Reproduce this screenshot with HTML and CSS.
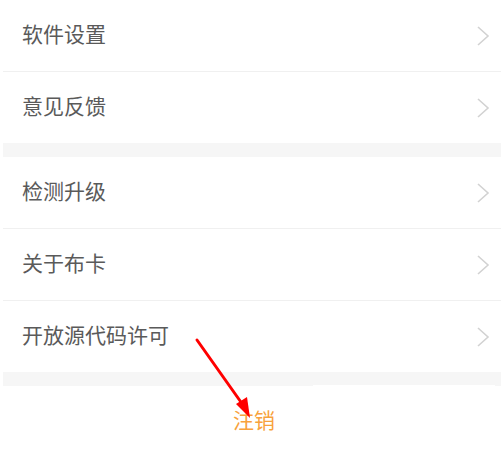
FILE: index.html
```html
<!DOCTYPE html>
<html lang="zh-CN">
<head>
<meta charset="UTF-8">
<title>设置</title>
<link rel="stylesheet" href="styles.css">
</head>
<body>
<div class="page">
  <ul class="group">
    <li class="item"><span class="label">软件设置</span><svg class="chev" viewBox="0 0 14 22"><polyline points="2,2 12,11 2,20"/></svg></li>
    <li class="item"><span class="label">意见反馈</span><svg class="chev" viewBox="0 0 14 22"><polyline points="2,2 12,11 2,20"/></svg></li>
  </ul>
  <div class="gap"></div>
  <ul class="group">
    <li class="item"><span class="label">检测升级</span><svg class="chev" viewBox="0 0 14 22"><polyline points="2,2 12,11 2,20"/></svg></li>
    <li class="item"><span class="label">关于布卡</span><svg class="chev" viewBox="0 0 14 22"><polyline points="2,2 12,11 2,20"/></svg></li>
    <li class="item"><span class="label">开放源代码许可</span><svg class="chev" viewBox="0 0 14 22"><polyline points="2,2 12,11 2,20"/></svg></li>
  </ul>
  <div class="gap"></div>
  <div class="logout">注销</div>

  <div class="patch"></div>
  <svg class="arrow" width="501" height="449" viewBox="0 0 501 449">
    <line x1="197" y1="340" x2="243" y2="405" stroke="#f00" stroke-width="3" stroke-linecap="round"/>
    <polygon points="250,418 236,404 247,397" fill="#f00"/>
  </svg>
</div>
</body>
</html>
```

FILE: styles.css
```css
html, body {
  margin: 0;
  padding: 0;
  background: #fff;
}
body {
  font-family: "Noto Sans CJK SC", "Noto Sans", sans-serif;
}
.page {
  position: relative;
  width: 501px;
  height: 449px;
  overflow: hidden;
}
.group {
  list-style: none;
  margin: 0 0 0 3px;
  padding: 0;
}
.item {
  display: flex;
  align-items: center;
  justify-content: space-between;
  height: 71px;
  padding: 0 11px 0 19px;
  border-bottom: 1px solid #f0f0f0;
  color: #5a5a5a;
  font-size: 21px;
}
.label {
  margin-top: -6px;
}
.group .item:last-child {
  border-bottom: none;
}
.chev {
  width: 14px;
  height: 22px;
  fill: none;
  stroke: #d2d2d2;
  stroke-width: 1.6;
}
.gap {
  height: 14px;
  margin-left: 3px;
  background: #f6f6f6;
}
.logout {
  padding-top: 21px;
  line-height: 24px;
  font-size: 21px;
  color: #f8a23c;
  text-align: center;
  padding-left: 7px;
}
.patch {
  position: absolute;
  left: 313px;
  top: 385px;
  width: 182px;
  height: 2px;
  background: #fff;
}
.arrow {
  position: absolute;
  left: 0;
  top: 0;
}
```
